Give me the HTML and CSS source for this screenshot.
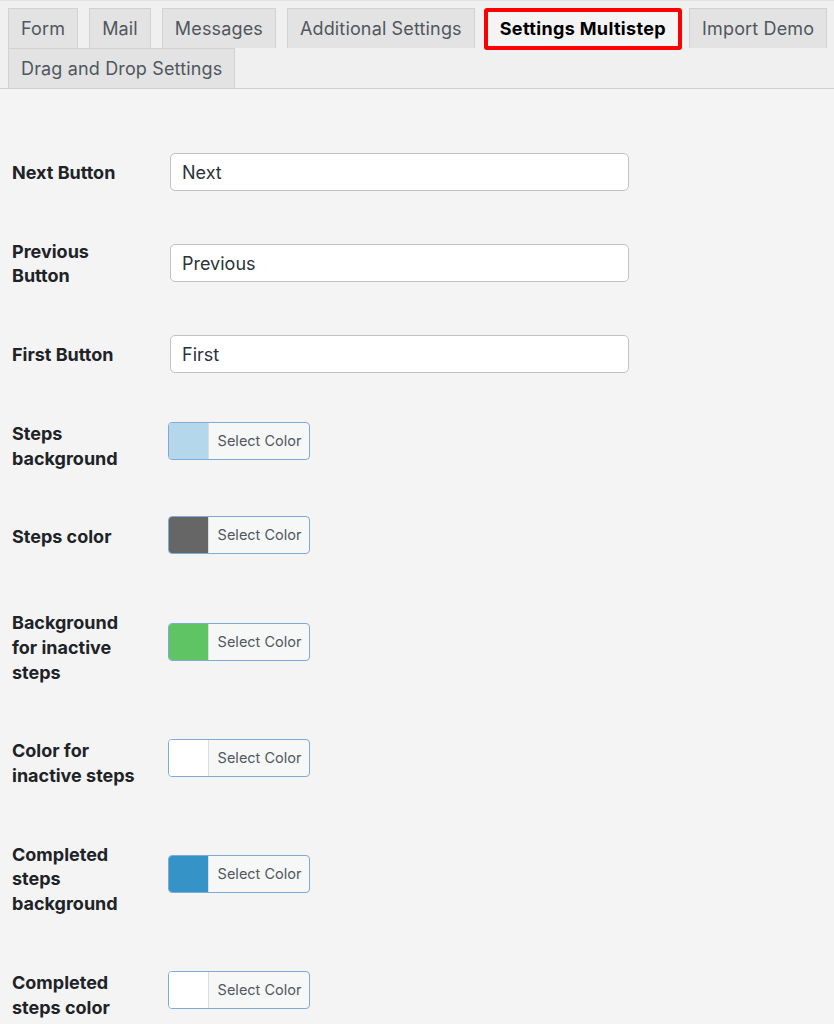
FILE: index.html
```html
<!DOCTYPE html>
<html lang="en">
<head>
<meta charset="utf-8">
<title>Settings Multistep</title>
<link rel="stylesheet" href="styles.css">
</head>
<body>
<nav class="tabs">
  <a class="tab">Form</a>
  <a class="tab">Mail</a>
  <a class="tab">Messages</a>
  <a class="tab">Additional Settings</a>
  <a class="tab tab-active">Settings Multistep</a>
  <a class="tab">Import Demo</a>
  <a class="tab">Drag and Drop Settings</a>
</nav>
<main class="panel">
  <table class="form-table">
    <tbody>
      <tr>
        <th>Next Button</th>
        <td><input class="text-input" type="text" value="Next"></td>
      </tr>
      <tr>
        <th>Previous Button</th>
        <td><input class="text-input" type="text" value="Previous"></td>
      </tr>
      <tr>
        <th>First Button</th>
        <td><input class="text-input" type="text" value="First"></td>
      </tr>
      <tr class="color-row">
        <th>Steps background</th>
        <td><button class="color-result" type="button"><span class="swatch swatch-lightblue"></span><span class="color-text">Select Color</span></button></td>
      </tr>
      <tr class="color-row">
        <th>Steps color</th>
        <td><button class="color-result" type="button"><span class="swatch swatch-gray"></span><span class="color-text">Select Color</span></button></td>
      </tr>
      <tr class="color-row">
        <th>Background for inactive steps</th>
        <td><button class="color-result" type="button"><span class="swatch swatch-green"></span><span class="color-text">Select Color</span></button></td>
      </tr>
      <tr class="color-row">
        <th>Color for inactive steps</th>
        <td><button class="color-result" type="button"><span class="swatch swatch-white"></span><span class="color-text">Select Color</span></button></td>
      </tr>
      <tr class="color-row">
        <th>Completed steps background</th>
        <td><button class="color-result" type="button"><span class="swatch swatch-blue"></span><span class="color-text">Select Color</span></button></td>
      </tr>
      <tr class="color-row">
        <th>Completed steps color</th>
        <td><button class="color-result" type="button"><span class="swatch swatch-white"></span><span class="color-text">Select Color</span></button></td>
      </tr>
    </tbody>
  </table>
</main>
</body>
</html>
```

FILE: styles.css
```css
html, body {
  margin: 0;
  padding: 0;
}

body {
  background: #f4f4f4;
  font-family: Inter, "Open Sans", "Liberation Sans", sans-serif;
  color: #1d2327;
  width: 834px;
  height: 1024px;
  overflow: hidden;
}

.tabs {
  display: flex;
  flex-wrap: wrap;
  align-items: flex-start;
  column-gap: 11px;
  padding: 7px 0 0 8px;
  background: #f0f0f0;
  border-top: 1px solid #e2e2e2;
  border-bottom: 1px solid #cfcfcf;
}

.tab {
  display: block;
  box-sizing: border-box;
  height: 40px;
  padding: 0 12px;
  border: 1px solid #d2d2d2;
  border-bottom: none;
  background: #e3e3e3;
  color: #50575e;
  font-size: 18px;
  letter-spacing: 0.15px;
  line-height: 40px;
  white-space: nowrap;
  text-decoration: none;
}

.tab-active {
  height: 42px;
  margin-bottom: -2px;
  margin-left: -2px;
  margin-right: -4px;
  border: 4px solid #ff0000;
  border-radius: 3px;
  background: #f4f4f4;
  color: #000;
  font-weight: 700;
  letter-spacing: 0.35px;
  line-height: 34px;
}

.panel {
  padding: 45px 0 0 12px;
}

.form-table {
  border-collapse: collapse;
  border-spacing: 0;
}

.form-table th {
  width: 128px;
  padding: 27px 28px 27px 0;
  text-align: left;
  vertical-align: top;
  font-size: 18px;
  font-weight: 700;
  line-height: 24.7px;
  color: #1d2327;
}

.form-table td {
  padding: 14px 0 16px 0;
  vertical-align: middle;
}

.color-row td {
  padding: 18px 0 30px 0;
}

.text-input {
  display: block;
  box-sizing: border-box;
  width: 459px;
  height: 38px;
  margin: 0 0 0 2px;
  padding: 0 11px;
  border: 1px solid #c2c2c2;
  border-radius: 5px;
  background: #fff;
  font-family: inherit;
  font-size: 18px;
  color: #2c3338;
}

.color-result {
  display: flex;
  box-sizing: border-box;
  width: 142px;
  height: 38px;
  padding: 0;
  border: 1px solid #7eaad6;
  border-radius: 4px;
  overflow: hidden;
  background: #f6f7f7;
  font-family: inherit;
  cursor: pointer;
}

.swatch {
  display: block;
  width: 39px;
  height: 100%;
  border-right: 1px solid #dcdcde;
}

.swatch-lightblue { background: #b4d7eb; }
.swatch-gray { background: #666666; }
.swatch-green { background: #5fc463; }
.swatch-white { background: #ffffff; }
.swatch-blue { background: #3593c7; }

.color-text {
  flex: 1;
  font-size: 14.5px;
  line-height: 36px;
  color: #50575e;
  text-align: center;
  padding-left: 1px;
}
```
